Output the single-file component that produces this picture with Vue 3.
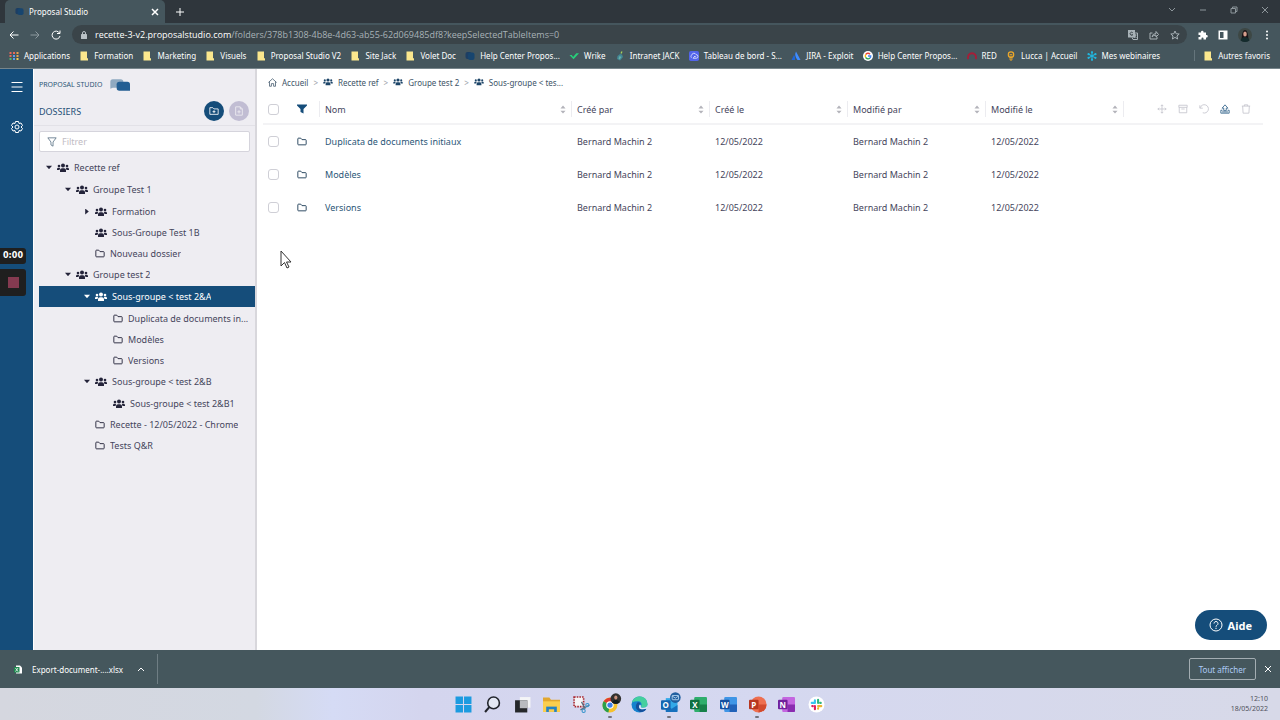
<template>
  <div class="screen">
    <svg class="sprite" aria-hidden="true">
      <symbol id="i-group" viewBox="0 0 24 20">
        <circle cx="12" cy="5" r="4" />
        <circle cx="4" cy="6" r="2.6" />
        <circle cx="20" cy="6" r="2.6" />
        <path d="M6 18v-3c0-3 2-4.600 4-4.600h4c2 0 4 1.600 4 4.600v3z" />
        <path d="M0 14v-1.500c0-2 1.200-3 3-3h2.500C6.500 10 6 11 5 14zM24 14v-1.500c0-2-1.200-3-3-3h-2.500C17.500 10 18 11 19 14z" />
      </symbol>
      <symbol id="i-folder" viewBox="0 0 24 20">
        <path d="M2 16.500v-13Q2 2 3.500 2H9l3 3.500h8.500Q22 5.500 22 7v9.500q0 1.500-1.500 1.500h-17Q2 18 2 16.500z" fill="none" stroke="currentColor" stroke-width="2.200" />
      </symbol>
      <symbol id="i-mark" viewBox="0 0 16 20">
        <path d="M1 1h13v13l2 1v4H1z" fill="#fbe78d" />
      </symbol>
      <symbol id="i-apps" viewBox="0 0 20 20">
        <path d="M1 2h4v4H1zM8 2h4v4H8zM1 8h4v4H1z" fill="#e8695c" />
        <path d="M15 2h4v4h-4zM15 8h4v4h-4z" fill="#e9a04e" />
        <path d="M8 8h4v4H8zM8 14h4v4H8z" fill="#5b9df0" />
        <path d="M1 14h4v4H1z" fill="#54b56c" />
        <path d="M15 14h4v4h-4z" fill="#f4cd55" />
      </symbol>
      <symbol id="i-studio" viewBox="0 0 20 20">
        <rect x="1" y="2" width="12" height="14" rx="4" fill="#1d3e63" />
        <rect x="6" y="3" width="13" height="15" rx="4" fill="#17456f" />
      </symbol>
      <symbol id="i-wrike" viewBox="0 0 22 20">
        <path d="M1 8h5l3 4 7-8h6L10 17z" fill="#27d07a" />
      </symbol>
      <symbol id="i-jack" viewBox="0 0 20 20">
        <path d="M10 6l4 1 2 5-6 7-6-3 1-6z" fill="#428795" />
        <path d="M9 10l4 2-4 5-2-2z" fill="#69b1a9" />
        <path d="M12 5l2-4" stroke="#a7d65c" stroke-width="2.500" />
      </symbol>
      <symbol id="i-cloud" viewBox="0 0 22 22">
        <rect width="22" height="22" rx="4" fill="#5264ea" />
        <path d="M6 15a3.500 3.500 0 0 1 0-6 5 5 0 0 1 9.500-1A4 4 0 0 1 16 16H9l4-5 2 3" fill="none" stroke="#fff" stroke-width="1.500" />
      </symbol>
      <symbol id="i-jira" viewBox="0 0 20 20">
        <path d="M6 8q4 4 2 10H1z" fill="#1f65d6" />
        <path d="M10 1l9 17h-6Q6 9 10 1z" fill="#3f8cff" />
      </symbol>
      <symbol id="i-google" viewBox="0 0 22 22">
        <circle cx="11" cy="11" r="11" fill="#fff" />
        <g fill="none" stroke-width="3">
          <path d="M15.500 7A6 6 0 0 0 5.800 8" stroke="#ea4335" />
          <path d="M5.800 8a6 6 0 0 0 0 6" stroke="#fbbc05" />
          <path d="M5.800 14a6 6 0 0 0 9.500 1.500" stroke="#34a853" />
          <path d="M15.300 15.500A6 6 0 0 0 17 11h-6" stroke="#4285f4" />
        </g>
      </symbol>
      <symbol id="i-red" viewBox="0 0 22 20">
        <path d="M2.500 17C1 9 5 4 11 4s10 5 8.500 13" fill="none" stroke="#a51e38" stroke-width="4" />
      </symbol>
      <symbol id="i-lucca" viewBox="0 0 20 22">
        <circle cx="10" cy="8" r="6" fill="none" stroke="#f0a929" stroke-width="2.500" />
        <path d="M7 8h6M8 10v10h4V10" fill="none" stroke="#f0a929" stroke-width="2" />
      </symbol>
      <symbol id="i-flake" viewBox="0 0 22 22">
        <path d="M11 1v20M2 6l18 10M20 6L2 16" stroke="#22b5dd" stroke-width="2.500" />
        <g fill="#22b5dd">
          <circle cx="11" cy="3" r="2.500" /><circle cx="11" cy="19" r="2.500" />
          <circle cx="3.500" cy="7" r="2.500" /><circle cx="18.500" cy="7" r="2.500" />
          <circle cx="3.500" cy="15" r="2.500" /><circle cx="18.500" cy="15" r="2.500" />
        </g>
      </symbol>
      <symbol id="i-move" viewBox="0 0 24 24">
        <path d="M12 2v20M2 12h20M9 5l3-3 3 3M9 19l3 3 3-3M5 9l-3 3 3 3M19 9l3 3-3 3" />
      </symbol>
      <symbol id="i-archive" viewBox="0 0 24 24">
        <path d="M2 3h20v5H2zM3 8v13h18V8M8 12h8" />
      </symbol>
      <symbol id="i-undo" viewBox="0 0 24 24">
        <path d="M2 3v7h7M3 9a10 10 0 1 1 6 12" />
      </symbol>
      <symbol id="i-upload" viewBox="0 0 24 24">
        <path d="M9 16v-6H5l7-8 7 8h-4v6zM6 15H2v7h20v-7h-4M5 19h14" />
      </symbol>
      <symbol id="i-trash" viewBox="0 0 24 24">
        <path d="M2 5h20M4 5l1 17h14l1-17M8 5V2h8v3" />
      </symbol>
    </svg>

    <header class="browser">
      <div class="tabstrip">
        <div class="tab">
          <svg class="tab-icon"><use href="#i-studio" /></svg>
          <span class="tab-title">Proposal Studio</span>
          <button class="plain" aria-label="Fermer l'onglet">
            <svg class="x" viewBox="0 0 8 8"><path d="M1 1l6 6M7 1L1 7" stroke-width="1.500" /></svg>
          </button>
        </div>
        <button class="plain new-tab" aria-label="Nouvel onglet">
          <svg viewBox="0 0 8 8"><path d="M4 0v8M0 4h8" /></svg>
        </button>
        <div class="window-buttons">
          <button class="plain" aria-label="Rechercher des onglets"><svg viewBox="0 0 8 8"><path d="M1 2l3 3 3-3" /></svg></button>
          <button class="plain" aria-label="Réduire"><svg viewBox="0 0 8 8"><path d="M1 4h6" /></svg></button>
          <button class="plain" aria-label="Restaurer"><svg viewBox="0 0 8 8"><path d="M1 2.500h4.500V7H1zM2.500 2.500V1H7v4.500H5.500" /></svg></button>
          <button class="plain" aria-label="Fermer"><svg viewBox="0 0 8 8"><path d="M1 1l6 6M7 1L1 7" /></svg></button>
        </div>
      </div>

      <div class="toolbar">
        <button class="plain nav" aria-label="Précédent"><svg viewBox="0 0 20 20"><path d="M19 10H2M9 3l-7 7 7 7" /></svg></button>
        <button class="plain nav dim" aria-label="Suivant"><svg viewBox="0 0 20 20"><path d="M1 10h17M11 3l7 7-7 7" /></svg></button>
        <button class="plain nav" aria-label="Actualiser"><svg viewBox="0 0 20 20"><path d="M17 6a8 8 0 1 0 1 6M18 1v6h-6" /></svg></button>
        <div class="omnibox">
          <svg class="lock" viewBox="0 0 12 16"><rect y="6" width="12" height="10" rx="1" fill="#b9c1c5" /><path d="M3 7V4a3 3 0 0 1 6 0v3" fill="none" stroke="#b9c1c5" stroke-width="2" /></svg>
          <span class="url"><b>recette-3-v2.proposalstudio.com</b>/folders/378b1308-4b8e-4d63-ab55-62d069485df8?keepSelectedTableItems=0</span>
          <button class="plain" aria-label="Traduire">
            <svg viewBox="0 0 20 20"><rect x="1" y="1" width="12" height="13" fill="#a8b2b7" /><path d="M10 6h9v13h-9l-2-4M12 10h5M15 9v2l-3 5M13 12l4 4" /><path d="M9.500 5.500a3 3 0 1 0 0 4H7" stroke="#3a4449" /></svg>
          </button>
          <button class="plain" aria-label="Partager">
            <svg viewBox="0 0 20 20"><path d="M7 6H2v12h14v-4M6 14q1-7 8-7V3l5 6-5 5v-4q-5 0-8 4z" /></svg>
          </button>
          <button class="plain" aria-label="Favori">
            <svg viewBox="0 0 20 20"><path d="M10 2l2.400 5.500 6 .5-4.500 4 1.300 6-5.200-3.200L4.800 18l1.300-6-4.500-4 6-.5z" /></svg>
          </button>
        </div>
        <div class="tools">
          <button class="plain" aria-label="Extensions"><svg viewBox="0 0 20 20"><path d="M1 5h5V4a2.500 2.500 0 0 1 5 0v1h5v5h1a2.500 2.500 0 0 1 0 5h-1v4h-5v-2a2 2 0 0 0-4 0v2H1v-5h2a2 2 0 0 0 0-4H1z" fill="#fff" /></svg></button>
          <button class="plain" aria-label="Panneau latéral"><svg viewBox="0 0 20 20"><path d="M1 1h18v18H1z" fill="#fff" /><path d="M4 4h7v12H4z" fill="#45565d" /></svg></button>
          <button class="plain avatar" aria-label="Profil"><svg viewBox="0 0 28 28"><circle cx="14" cy="14" r="14" fill="#3d4744" /><path d="M7 23Q8 4 14 4t7 19z" fill="#1b1416" /><ellipse cx="14" cy="12" rx="3.500" ry="5" fill="#d69e8c" /><path d="M5 25q2-7 9-7t9 7q-9 6-18 0z" fill="#142b2d" /></svg></button>
          <button class="plain" aria-label="Menu"><svg viewBox="0 0 20 20"><circle cx="10" cy="3" r="2" fill="#fff" /><circle cx="10" cy="10" r="2" fill="#fff" /><circle cx="10" cy="17" r="2" fill="#fff" /></svg></button>
        </div>
      </div>

      <nav class="bookmarks" aria-label="Favoris">
        <div class="bookmark-list">
          <a v-for="b in bookmarks" :key="b.id" href="#" class="bookmark">
            <svg><use :href="`#i-${b.icon}`" /></svg>{{ b.label }}
          </a>
        </div>
        <a href="#" class="bookmark others"><svg><use href="#i-mark" /></svg>Autres favoris</a>
      </nav>
    </header>

    <div class="app">
      <nav class="rail" aria-label="Navigation">
        <button class="plain" aria-label="Menu principal"><svg viewBox="0 0 24 24"><path d="M1 3h22M1 12h22M1 21h22" /></svg></button>
        <button class="plain" aria-label="Paramètres">
          <svg viewBox="0 0 24 24"><path d="M9 1h6l1 4 4-1 3 5-3 3 3 3-3 5-4-1-1 4H9l-1-4-4 1-3-5 3-3-3-3 3-5 4 1z" /><circle cx="12" cy="12" r="4" /></svg>
        </button>
      </nav>

      <aside class="sidebar">
        <div class="brand">
          PROPOSAL STUDIO
          <svg viewBox="0 0 60 36"><path d="M8 1h24q8 0 8 8v9q0 8-8 8H8l-7 3V9q0-8 7-8z" fill="#8fa9c1" /><path d="M28 8h24q8 0 8 8v19H28q-8 0-8-8V16q0-8 8-8z" fill="#235e93" /></svg>
        </div>
        <div class="side-head">
          <h1>DOSSIERS</h1>
          <button class="round" aria-label="Nouveau dossier"><svg viewBox="0 0 24 24"><path d="M2 4h7l3 3h10v13H2zM12 10v7M8.500 13.500h7" /></svg></button>
          <button class="round" aria-label="Nouveau document" disabled><svg viewBox="0 0 24 24"><path d="M4 2h11l5 5v15H4zM15 2v5h5M12 10v8M8 14h8" /></svg></button>
        </div>
        <label class="filter">
          <svg viewBox="0 0 24 24"><path d="M2 2h20l-7.500 10v10l-5-3v-7z" /></svg>
          <input v-model="query" type="text" placeholder="Filtrer" aria-label="Filtrer" />
        </label>
        <ul class="tree">
          <li v-for="node in visibleNodes" :key="node.id" :class="['node', `level-${node.level}`, { open: node.caret === 'down', selected: node.id === selected }]" @click="selected = node.id">
            <span :class="['caret', node.caret]" />
            <svg :class="node.type"><use :href="`#i-${node.type}`" /></svg>
            <span class="label">{{ node.label }}</span>
          </li>
        </ul>
      </aside>

      <main class="content">
        <nav class="crumbs" aria-label="Fil d'Ariane">
          <a href="#"><svg class="home" viewBox="0 0 24 24"><path d="M1 12L12 2l11 10M4 10v12h5v-7h6v7h5V10" /></svg>Accueil</a>
          <template v-for="crumb in crumbs" :key="crumb">
            <span class="sep">&gt;</span>
            <a href="#"><svg><use href="#i-group" /></svg>{{ crumb }}</a>
          </template>
        </nav>

        <table>
          <colgroup>
            <col class="c-check" />
            <col class="c-icon" />
            <col class="c-name" />
            <col v-for="n in 4" :key="n" class="c-meta" />
            <col />
          </colgroup>
          <thead>
            <tr>
              <th><input type="checkbox" aria-label="Tout sélectionner" /></th>
              <th>
                <button class="plain funnel" aria-label="Filtres"><svg viewBox="0 0 20 20"><path d="M0 1h20v2l-7 7v9l-6-3v-6L0 3z" /></svg></button>
              </th>
              <th v-for="col in columns" :key="col">
                <div class="head-cell">
                  {{ col }}
                  <button class="plain sort" :aria-label="`Trier par ${col}`"><svg viewBox="0 0 10 16"><path d="M5 1l4.500 5h-9zM5 15l4.500-5h-9z" /></svg></button>
                </div>
              </th>
              <th>
                <div class="head-cell actions">
                  <button v-for="a in actions" :key="a.icon" class="plain" :disabled="!a.enabled" :aria-label="a.label">
                    <svg><use :href="`#i-${a.icon}`" /></svg>
                  </button>
                </div>
              </th>
            </tr>
          </thead>
          <tbody>
            <tr v-for="row in rows" :key="row">
              <td><input type="checkbox" :aria-label="row" /></td>
              <td><svg class="row-folder"><use href="#i-folder" /></svg></td>
              <td class="name"><a href="#">{{ row }}</a></td>
              <td>Bernard Machin 2</td>
              <td>12/05/2022</td>
              <td>Bernard Machin 2</td>
              <td>12/05/2022</td>
              <td></td>
            </tr>
          </tbody>
        </table>

        <button class="help">
          <svg viewBox="0 0 28 28"><circle cx="14" cy="14" r="12" /><path d="M10 11a4 4 0 1 1 6 3.500q-2 1-2 3M14 19.500v2.500" /></svg>
          Aide
        </button>
      </main>

      <div class="timer">0:00</div>
      <button class="stop" aria-label="Arrêter l'enregistrement"><span /></button>
      <svg class="pointer" viewBox="0 0 12 19"><path d="M1 1v15l3.500-3.500L7 18l2-1-2.500-5H11z" /></svg>
    </div>

    <div class="downloads">
      <svg class="file" viewBox="0 0 16 18"><path d="M4 1h8l4 4v12H4z" fill="#fff" /><rect y="4" width="11" height="11" fill="#1f8a50" /><path d="M3 6l5 7M8 6l-5 7" stroke="#fff" stroke-width="1.500" /></svg>
      <a href="#">Export-document-....xlsx</a>
      <button class="plain" aria-label="Options du fichier"><svg viewBox="0 0 8 8"><path d="M1 6l3-3 3 3" /></svg></button>
      <span class="rule" />
      <button class="show-all">Tout afficher</button>
      <button class="plain" aria-label="Fermer la barre"><svg viewBox="0 0 8 8"><path d="M1 1l6 6M7 1L1 7" /></svg></button>
    </div>

    <footer class="taskbar">
      <div class="task-icons">
        <button class="plain" aria-label="Démarrer"><svg viewBox="0 0 32 32"><path d="M1 1h14v14H1zM17 1h14v14H17zM1 17h14v14H1zM17 17h14v14H17z" fill="#1c9be0" /></svg></button>
        <button class="plain" aria-label="Rechercher"><svg viewBox="0 0 32 32"><circle cx="18" cy="13" r="11" fill="#e4e8f4" stroke="#22252c" stroke-width="3" /><path d="M10 21l-8 9" stroke="#22252c" stroke-width="4" /></svg></button>
        <button class="plain" aria-label="Vue des tâches"><svg viewBox="0 0 32 32"><path d="M11 2h20v20H11z" fill="#f4f5f7" /><path d="M2 8h23v23H2z" fill="#25272a" /><path d="M11 8h14v15H11z" fill="#b9bbbf" /></svg></button>
        <button class="plain" aria-label="Explorateur"><svg viewBox="0 0 32 32"><path d="M0 3h12l3 4h17v23H0z" fill="#e2a72e" /><path d="M0 10h32v20H0z" fill="#fbce4d" /><path d="M6 20h20v10H6z" fill="#2482c4" /><path d="M11 25h10v5H11z" fill="#fbce4d" /></svg></button>
        <button class="plain" aria-label="Capture"><svg viewBox="0 0 32 32"><rect x="2" y="2" width="18" height="18" fill="#f5f5f7" stroke="#a9272f" stroke-width="3" stroke-dasharray="3 2" /><path d="M16 11l7 13M31 17l-17 9" stroke="#5a7184" stroke-width="2.500" /><circle cx="27" cy="17" r="3" fill="none" stroke="#3594cb" stroke-width="2" /><circle cx="20" cy="28" r="3" fill="none" stroke="#3594cb" stroke-width="2" /></svg></button>
        <button class="plain running" aria-label="Chrome">
          <svg viewBox="0 0 32 32"><circle cx="15" cy="17" r="14" fill="#f6c12c" /><path d="M15 17L3 10a14 14 0 0 1 24 0z" fill="#e03c31" /><path d="M15 17L3 10a14 14 0 0 0 9 21z" fill="#2c9f4b" /><circle cx="15" cy="17" r="7" fill="#fff" /><circle cx="15" cy="17" r="5" fill="#3c7fe8" /><circle cx="26" cy="5" r="10" fill="#32302f" /><ellipse cx="26" cy="3" rx="3" ry="4" fill="#c9917c" /><path d="M19 12q2-5 7-5t7 5q-7 5-14 0z" fill="#111c1d" /></svg>
        </button>
        <button class="plain" aria-label="Edge"><svg viewBox="0 0 32 32"><circle cx="16" cy="16" r="15" fill="#1682ce" /><path d="M2 12C6-3 30-3 31 15q0 7-9 7-5-1-2-5 0-8-8-7-6 0-10 2z" fill="#45cf9e" /><path d="M12 12q-8 10 5 18 8 1 12-6-14 4-14-5 0-5 3-5-2-3-6-2z" fill="#15509c" /><path d="M19 18q-2 5 4 4 7 0 8-6l-1 8q-15 3-15-4 0-5 4-2z" fill="#dce6f6" /></svg></button>
        <button class="plain running" aria-label="Outlook">
          <svg viewBox="0 0 32 32"><path d="M9 4h22v24H9z" fill="#32a9e8" /><path d="M9 17l11 7 11-7v13H9z" fill="#1670bd" /><rect y="8" width="18" height="18" rx="2" fill="#1565b0" /><text x="9" y="23" class="glyph">O</text><circle cx="27" cy="3" r="10" fill="#205f9f" /><rect x="21" y="-1" width="12" height="8" rx="1" fill="none" stroke="#c4e2fa" stroke-width="1.500" /><path d="M21 0l6 4 6-4" fill="none" stroke="#c4e2fa" stroke-width="1.500" /></svg>
        </button>
        <button v-for="o in office" :key="o.label" :class="['plain', { running: o.running }]" :aria-label="o.label">
          <svg viewBox="0 0 32 32">
            <circle v-if="o.letter === 'P'" cx="18" cy="16" r="15" :fill="o.light" />
            <rect v-else x="8" y="2" width="24" height="28" rx="2" :fill="o.light" />
            <path v-if="o.letter !== 'P'" d="M18 16h14v12q0 2-2 2H18z" :fill="o.mid" />
            <path v-else d="M18 16h15a15 15 0 0 1-15 15z" :fill="o.mid" />
            <rect y="7" width="18" height="18" rx="2" :fill="o.dark" />
            <text x="9" y="22" class="glyph">{{ o.letter }}</text>
          </svg>
        </button>
        <button class="plain" aria-label="Slack">
          <svg viewBox="0 0 32 32"><circle cx="16" cy="16" r="15" fill="#fff" /><g stroke-width="4" stroke-linecap="round"><path d="M13 8v5M7 13h5" stroke="#36c5f0" /><path d="M19 7v6M24 13h-1" stroke="#2eb67d" /><path d="M19 19h6M19 24v-1" stroke="#ecb22e" /><path d="M13 19v6M8 19h1" stroke="#e01e5a" /></g></svg>
        </button>
      </div>
      <div class="clock">12:10<br />18/05/2022</div>
    </footer>
  </div>
</template>

<script setup>
import { ref, computed } from "vue";

const bookmarks = [
  { id: 1, icon: "apps", label: "Applications" },
  { id: 2, icon: "mark", label: "Formation" },
  { id: 3, icon: "mark", label: "Marketing" },
  { id: 4, icon: "mark", label: "Visuels" },
  { id: 5, icon: "mark", label: "Proposal Studio V2" },
  { id: 6, icon: "mark", label: "Site Jack" },
  { id: 7, icon: "mark", label: "Volet Doc" },
  { id: 8, icon: "studio", label: "Help Center Propos..." },
  { id: 9, icon: "wrike", label: "Wrike" },
  { id: 10, icon: "jack", label: "Intranet JACK" },
  { id: 11, icon: "cloud", label: "Tableau de bord - S..." },
  { id: 12, icon: "jira", label: "JIRA - Exploit" },
  { id: 13, icon: "google", label: "Help Center Propos..." },
  { id: 14, icon: "red", label: "RED" },
  { id: 15, icon: "lucca", label: "Lucca | Accueil" },
  { id: 16, icon: "flake", label: "Mes webinaires" },
];

const nodes = [
  { id: 1, level: 0, type: "group", caret: "down", label: "Recette ref" },
  { id: 2, level: 1, type: "group", caret: "down", label: "Groupe Test 1" },
  { id: 3, level: 2, type: "group", caret: "right", label: "Formation" },
  { id: 4, level: 2, type: "group", label: "Sous-Groupe Test 1B" },
  { id: 5, level: 2, type: "folder", label: "Nouveau dossier" },
  { id: 6, level: 1, type: "group", caret: "down", label: "Groupe test 2" },
  { id: 7, level: 2, type: "group", caret: "down", label: "Sous-groupe < test 2&A" },
  { id: 8, level: 3, type: "folder", label: "Duplicata de documents in..." },
  { id: 9, level: 3, type: "folder", label: "Modèles" },
  { id: 10, level: 3, type: "folder", label: "Versions" },
  { id: 11, level: 2, type: "group", caret: "down", label: "Sous-groupe < test 2&B" },
  { id: 12, level: 3, type: "group", label: "Sous-groupe < test 2&B1" },
  { id: 13, level: 2, type: "folder", label: "Recette - 12/05/2022 - Chrome" },
  { id: 14, level: 2, type: "folder", label: "Tests Q&R" },
];

const crumbs = ["Recette ref", "Groupe test 2", "Sous-groupe < tes..."];
const columns = ["Nom", "Créé par", "Créé le", "Modifié par", "Modifié le"];
const rows = ["Duplicata de documents initiaux", "Modèles", "Versions"];

const actions = [
  { icon: "move", label: "Déplacer" },
  { icon: "archive", label: "Archiver" },
  { icon: "undo", label: "Restaurer" },
  { icon: "upload", label: "Importer", enabled: true },
  { icon: "trash", label: "Supprimer" },
];

const office = [
  { letter: "X", label: "Excel", light: "#2fae6c", mid: "#17804a", dark: "#107040" },
  { letter: "W", label: "Word", light: "#3f95e6", mid: "#2161b8", dark: "#17509f" },
  { letter: "P", label: "PowerPoint", light: "#ee6f50", mid: "#d24a2e", dark: "#b8371f", running: true },
  { letter: "N", label: "OneNote", light: "#c466e0", mid: "#8a2cb0", dark: "#70209b" },
];

const query = ref("");
const selected = ref(7);

const visibleNodes = computed(() => {
  const q = query.value.toLowerCase();
  return nodes.filter((n) => n.label.toLowerCase().includes(q));
});
</script>

<style>
body {
  background: #fff;
}
</style>

<style scoped>
.screen {
  display: flex;
  flex-direction: column;
  min-height: 100vh;
  font-family: "Noto Sans", "Open Sans", sans-serif;
  font-size: 9px;
  color: #45455c;
}

.sprite {
  position: absolute;
  width: 0;
  height: 0;
}

svg {
  display: block;
  flex: none;
}

.plain {
  display: flex;
  padding: 0;
  border: 0;
  background: none;
  color: inherit;
}

a {
  color: inherit;
  text-decoration: none;
}

/* browser */
.browser {
  background: #45565d;
  color: #fff;
  font-size: 8px;
}

.browser .plain svg,
.downloads .plain svg {
  width: 8px;
  height: 8px;
  fill: none;
  stroke: currentColor;
}

.tabstrip {
  display: flex;
  align-items: center;
  height: 23px;
  padding-left: 5px;
  background: #2f363c;
}

.tab {
  display: flex;
  align-items: center;
  gap: 5px;
  box-sizing: border-box;
  width: 160px;
  height: 23px;
  padding: 0 6px 0 10px;
  border-radius: 5px 5px 0 0;
  background: #45565d;
}

.tab-icon {
  width: 9px;
  height: 9px;
}

.tab-title {
  flex: 1;
}

.new-tab {
  margin-left: 11px;
}

.window-buttons {
  display: flex;
  gap: 23px;
  margin: 0 11px 4px auto;
  color: #8d969b;
}

.toolbar {
  display: flex;
  align-items: center;
  height: 23px;
  padding: 0 8px 0 9px;
}

.toolbar .nav {
  margin-right: 11px;
}

.toolbar .plain svg {
  width: 10px;
  height: 10px;
}

.toolbar .nav svg {
  stroke-width: 2;
}

.dim {
  color: #8d999f;
}

.omnibox {
  display: flex;
  flex: 1;
  align-items: center;
  gap: 11px;
  height: 19px;
  padding: 0 7px 0 9px;
  border-radius: 10px;
  background: #3a4449;
  color: #a8b2b7;
}

.omnibox .plain svg {
  stroke-width: 2;
}

.lock {
  width: 6px;
  height: 8px;
}

.url {
  flex: 1;
  margin-left: -3px;
  font-family: "Open Sans", "Noto Sans", sans-serif;
  font-size: 9px;
}

.url b {
  font-weight: 400;
  color: #fff;
}

.tools {
  display: flex;
  align-items: center;
  gap: 10px;
  margin-left: 11px;
}

.tools .plain svg {
  stroke: none;
}

.tools .avatar svg {
  width: 14px;
  height: 14px;
}

.bookmarks {
  display: flex;
  align-items: center;
  height: 19px;
  padding-bottom: 3px;
  border-bottom: 1px solid #77858b;
}

.bookmark-list {
  display: flex;
  flex: 1;
  justify-content: space-between;
  padding: 0 34px 0 9px;
}

.bookmark {
  display: flex;
  align-items: center;
  gap: 5px;
  white-space: nowrap;
}

.bookmark svg {
  width: 10px;
  height: 10px;
}

.others {
  padding: 0 10px 0 8px;
  border-left: 1px solid #65757c;
}

/* application */
.app {
  position: relative;
  display: flex;
  flex: 1;
}

.rail {
  display: flex;
  flex-direction: column;
  align-items: center;
  gap: 28px;
  width: 33px;
  padding-top: 12px;
  background: #154d7a;
  color: #fff;
}

.rail svg {
  width: 12px;
  height: 12px;
  fill: none;
  stroke: currentColor;
  stroke-width: 2;
}

.sidebar {
  box-sizing: border-box;
  width: 224px;
  border-left: 1px solid #fff;
  border-right: 2px solid #d8d7dc;
  background: #eeedf2;
}

.brand {
  display: flex;
  align-items: center;
  gap: 8px;
  height: 31px;
  padding-left: 5px;
  font-size: 7px;
  color: #2f5878;
}

.brand svg {
  width: 20px;
  height: 12px;
}

.side-head {
  display: flex;
  align-items: center;
  gap: 5px;
  height: 22px;
  padding: 0 6px 3px 5px;
  border-bottom: 1px solid #e2e1e7;
}

.side-head h1 {
  flex: 1;
  margin: 0;
  font-size: 9px;
  font-weight: 400;
  color: #1f4f76;
}

.round {
  display: flex;
  align-items: center;
  justify-content: center;
  width: 20px;
  height: 20px;
  padding: 0;
  border: 0;
  border-radius: 50%;
  background: #154d7a;
  color: #fff;
}

.round:disabled {
  background: #c1bdd3;
  color: #eeedf2;
}

.round svg {
  width: 10px;
  height: 10px;
  fill: none;
  stroke: currentColor;
  stroke-width: 2;
}

.filter {
  display: flex;
  align-items: center;
  gap: 5px;
  box-sizing: border-box;
  height: 21px;
  margin: 5px;
  padding: 0 7px;
  border: 1px solid #d5d4dc;
  border-radius: 2px;
  background: #fff;
}

.filter svg {
  width: 10px;
  height: 10px;
  fill: none;
  stroke: #5c7487;
  stroke-width: 2;
}

.filter input {
  flex: 1;
  min-width: 0;
  padding: 0;
  border: 0;
  outline: 0;
  font: inherit;
}

.filter input::placeholder {
  color: #bfbcc4;
}

.tree {
  margin: 0 0 0 5px;
  padding: 0;
  list-style: none;
}

.node {
  display: flex;
  align-items: center;
  height: 21px;
  cursor: pointer;
}

.node.open {
  margin-bottom: 1px;
}

.node svg {
  margin-right: 5px;
  color: #24243a;
  fill: #24243a;
}

.node svg.group {
  width: 12px;
  height: 10px;
}

.node svg.folder {
  width: 10px;
  height: 9px;
}

.label {
  overflow: hidden;
  white-space: nowrap;
  text-overflow: ellipsis;
}

.level-0 {
  padding-left: 7px;
}

.level-1 {
  padding-left: 26px;
}

.level-2 {
  padding-left: 45px;
}

.level-3 {
  padding-left: 63px;
}

.caret {
  flex: none;
  width: 6px;
  height: 6px;
  margin-right: 5px;
}

.caret.down {
  background: #24243a;
  clip-path: polygon(0 20%, 100% 20%, 50% 80%);
}

.caret.right {
  background: #24243a;
  clip-path: polygon(20% 0, 80% 50%, 20% 100%);
}

.node.selected {
  background: #154d7a;
  color: #fff;
}

.node.selected svg {
  fill: #fff;
  color: #fff;
}

.selected .caret {
  background: #fff;
}

.content {
  position: relative;
  flex: 1;
  padding: 0 17px 0 6px;
  background: #fff;
}

.crumbs {
  display: flex;
  align-items: center;
  gap: 5px;
  height: 26px;
  padding-left: 5px;
  font-size: 8px;
  color: #3e5468;
}

.crumbs a {
  display: flex;
  align-items: center;
  gap: 5px;
}

.crumbs svg {
  width: 10px;
  height: 8px;
  fill: #1d4568;
}

.crumbs .home {
  width: 9px;
  height: 9px;
  fill: none;
  stroke: #3e5468;
  stroke-width: 2;
}

.sep {
  color: #9a9fa8;
}

table {
  width: 100%;
  table-layout: fixed;
  border-collapse: collapse;
}

.c-check {
  width: 29px;
}

.c-icon {
  width: 27px;
}

.c-name {
  width: 25.2%;
}

.c-meta {
  width: 13.8%;
}

th,
td {
  padding: 0 0 0 6px;
  text-align: left;
  font-weight: 400;
}

th {
  height: 28px;
  padding-left: 0;
  border-bottom: 2px solid #f3f3f5;
}

th:first-child,
th:nth-child(2),
td:first-child,
td:nth-child(2) {
  padding-left: 5px;
}

td {
  height: 33px;
}

.name {
  color: #2c5778;
}

th input,
td input {
  display: block;
  width: 11px;
  height: 11px;
  margin: 0;
  border: 1px solid #cfcfd6;
  border-radius: 3px;
  appearance: none;
  background: #fff;
}

.row-folder {
  width: 10px;
  height: 9px;
  color: #1f3d58;
}

.funnel svg {
  width: 10px;
  height: 10px;
  fill: #154d7a;
}

.head-cell {
  display: flex;
  align-items: center;
  justify-content: space-between;
  height: 16px;
  padding: 0 5px;
  border-left: 1px solid #ececf0;
}

.sort svg {
  width: 6px;
  height: 9px;
  fill: #b3b3ba;
}

.actions {
  justify-content: flex-end;
  gap: 11px;
  padding-right: 12px;
}

.actions svg {
  width: 10px;
  height: 10px;
  fill: none;
  stroke: #2c5f88;
  stroke-width: 2;
}

.actions :disabled svg {
  stroke: #c4c4cc;
}

.help {
  position: absolute;
  right: 13px;
  bottom: 10px;
  display: flex;
  align-items: center;
  gap: 5px;
  height: 30px;
  padding: 0 15px 0 14px;
  border: 0;
  border-radius: 15px;
  background: #154d7a;
  color: #fff;
  font: 700 11px "Noto Sans", sans-serif;
}

.help svg {
  width: 14px;
  height: 14px;
  fill: none;
  stroke: #fff;
  stroke-width: 2;
}

/* recorder overlay */
.timer,
.stop {
  position: absolute;
  left: 0;
  width: 26px;
  border: 0;
  border-radius: 0 3px 3px 0;
  background: #1f1f1f;
}

.timer {
  top: 179px;
  height: 16px;
  color: #fff;
  font: 700 8px/16px "DejaVu Sans", sans-serif;
  text-align: center;
}

.stop {
  display: flex;
  align-items: center;
  top: 200px;
  height: 27px;
  padding: 0 0 0 8px;
}

.stop span {
  width: 11px;
  height: 11px;
  background: #843a50;
}

.pointer {
  position: absolute;
  top: 181px;
  left: 280px;
  width: 12px;
  height: 19px;
  fill: #fff;
  stroke: #333;
}

/* bottom bars */
.downloads {
  display: flex;
  align-items: center;
  height: 38px;
  padding: 0 8px 0 14px;
  background: #45575d;
  color: #fff;
  font-size: 8px;
}

.file {
  width: 8px;
  height: 9px;
}

.downloads a {
  margin: 0 14px 0 10px;
}

.rule {
  width: 1px;
  height: 30px;
  margin-left: 12px;
  background: #6f7e84;
}

.show-all {
  height: 22px;
  margin: 0 8px 0 auto;
  padding: 0 9px;
  border: 1px solid #a3adb2;
  border-radius: 2px;
  background: none;
  color: #adcbf5;
  font: inherit;
}

.taskbar {
  display: grid;
  grid-template-columns: 1fr 370px 1fr;
  align-items: center;
  height: 32px;
  background: linear-gradient(90deg, #d5d7df, #d3d8e2 20%, #d5dbf5 26%, #d4d5ee 33%, #d5d8f0 60%, #d7d9e8);
}

.task-icons {
  display: flex;
  grid-column: 2;
  justify-content: space-between;
}

.task-icons .plain {
  position: relative;
}

.task-icons svg {
  width: 17px;
  height: 17px;
  overflow: visible;
}

.running::after {
  position: absolute;
  bottom: -5px;
  left: 6px;
  width: 4px;
  height: 2px;
  border-radius: 1px;
  background: #72737e;
  content: "";
}

.glyph {
  fill: #fff;
  font: 700 15px "Open Sans", sans-serif;
  text-anchor: middle;
}

.clock {
  padding-right: 12px;
  color: #4f525c;
  font-size: 7px;
  line-height: 10px;
  text-align: right;
}
</style>
